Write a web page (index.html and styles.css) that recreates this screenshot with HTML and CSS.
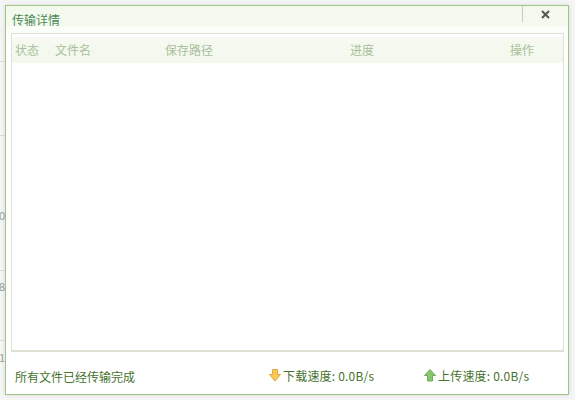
FILE: index.html
```html
<!DOCTYPE HTML>
<html>
<head>
    <title>传输详情</title>
    <meta charset="utf-8" />
    <link rel="stylesheet" href="styles.css">
</head>
<body>
    <div class="backdrop">
        <span class="bg-line line-1"></span>
        <span class="bg-line line-2"></span>
        <span class="bg-line line-3"></span>
        <span class="bg-line line-4"></span>
        <span class="bg-num num-1">0</span>
        <span class="bg-num num-2">8</span>
        <span class="bg-num num-3">1</span>
    </div>

    <div id="dialog">
        <div class="dialog-head">
            <span class="dialog-title">传输详情</span>
            <span class="dialog-close">
                <svg width="9" height="9" viewBox="0 0 9 9">
                    <path d="M1 1L8 8M8 1L1 8" stroke="#555" stroke-width="2" fill="none" />
                </svg>
            </span>
        </div>

        <div class="transfer-list">
            <div class="list-head">
                <span class="col-status">状态</span>
                <span class="col-name">文件名</span>
                <span class="col-path">保存路径</span>
                <span class="col-progress">进度</span>
                <span class="col-action">操作</span>
            </div>
        </div>

        <div class="dialog-foot">
            <span class="foot-status">所有文件已经传输完成</span>
            <span class="speed speed-down">
                <svg width="12" height="13" viewBox="0 0 12 13">
                    <path d="M3.500 .5H8.500V5.500H11.500L6 12L.5 5.500H3.500Z" fill="#fbc850" stroke="#e2a446" />
                </svg>
                下载速度: 0.0B/s
            </span>
            <span class="speed speed-up">
                <svg width="12" height="13" viewBox="0 0 12 13">
                    <path d="M6 .5L11.500 6.500H8.500V12H3.500V6.500H.5Z" fill="#88c670" stroke="#6fa95a" />
                </svg>
                上传速度: 0.0B/s
            </span>
        </div>
    </div>
</body>
</html>
```

FILE: styles.css
```css
html, body { margin: 0; padding: 0; }
html { box-sizing: border-box; }
*, *:before, *:after { box-sizing: inherit; }

body {
    width: 575px;
    height: 400px;
    overflow: hidden;
    padding: 5px;
    background-color: #f5f5f5;
    font-family: "Noto Sans CJK SC", "Liberation Sans", sans-serif;
    font-size: 12px;
    position: relative;
}

/* Page showing behind the dialog */
.bg-line {
    position: absolute;
    left: 0;
    width: 5px;
    height: 1px;
    background-color: #dcdcdc;
}
.line-1 { top: 61px; }
.line-2 { top: 135px; }
.line-3 { top: 270px; }
.line-4 { top: 340px; }

.bg-num {
    position: absolute;
    left: -1px;
    color: #9a9aa8;
    font-size: 11px;
    line-height: 12px;
}
.num-1 { top: 209px; }
.num-2 { top: 280px; }
.num-3 { top: 351px; }

/* Dialog */
#dialog {
    position: relative;
    display: flex;
    flex-direction: column;
    width: 564px;
    height: 390px;
    padding: 0 4px 0 5px;
    background-color: #ffffff;
    border: 1px solid #9dc583;
    box-shadow: 0 0 4px rgba(0, 0, 0, 0.12);
}

.dialog-head {
    display: flex;
    align-items: center;
    justify-content: space-between;
    flex: none;
    height: 27px;
    margin: 0 -4px 0 -5px;
    padding: 0 0 0 6px;
    background-image: linear-gradient(to bottom, #f4f9ee 0, #f5faf0 20px, #fafdf7 21px, #fdfefc 27px);
}

.dialog-title {
    color: #4a8a55;
    font-size: 12px;
    line-height: 24px;
}

.dialog-close {
    display: flex;
    align-items: center;
    justify-content: center;
    align-self: flex-start;
    width: 46px;
    height: 16px;
    border-left: 1px solid #c4cbbf;
}

.transfer-list {
    flex: none;
    height: 319px;
    border: 1px solid #dde0d3;
    border-width: 1px 1px 2px 1px;
}

.list-head {
    display: flex;
    height: 26px;
    margin-top: 3px;
    padding-left: 3px;
    background-image: linear-gradient(to bottom, #f6faf2, #f2f8ec);
    color: #a9bf9a;
    font-size: 12px;
    line-height: 25px;
}

.col-status { width: 40px; }
.col-name { width: 110px; }
.col-path { width: 185px; }
.col-progress { width: 160px; }

.dialog-foot {
    display: flex;
    align-items: center;
    flex: none;
    height: 49px;
    padding-left: 4px;
    color: #45732d;
    font-size: 12px;
}

.foot-status { width: 254px; }

.speed {
    display: flex;
    align-items: center;
    gap: 2px;
    margin-bottom: 3px;
    letter-spacing: 0.2px;
}
.speed-down { width: 155px; }
```
